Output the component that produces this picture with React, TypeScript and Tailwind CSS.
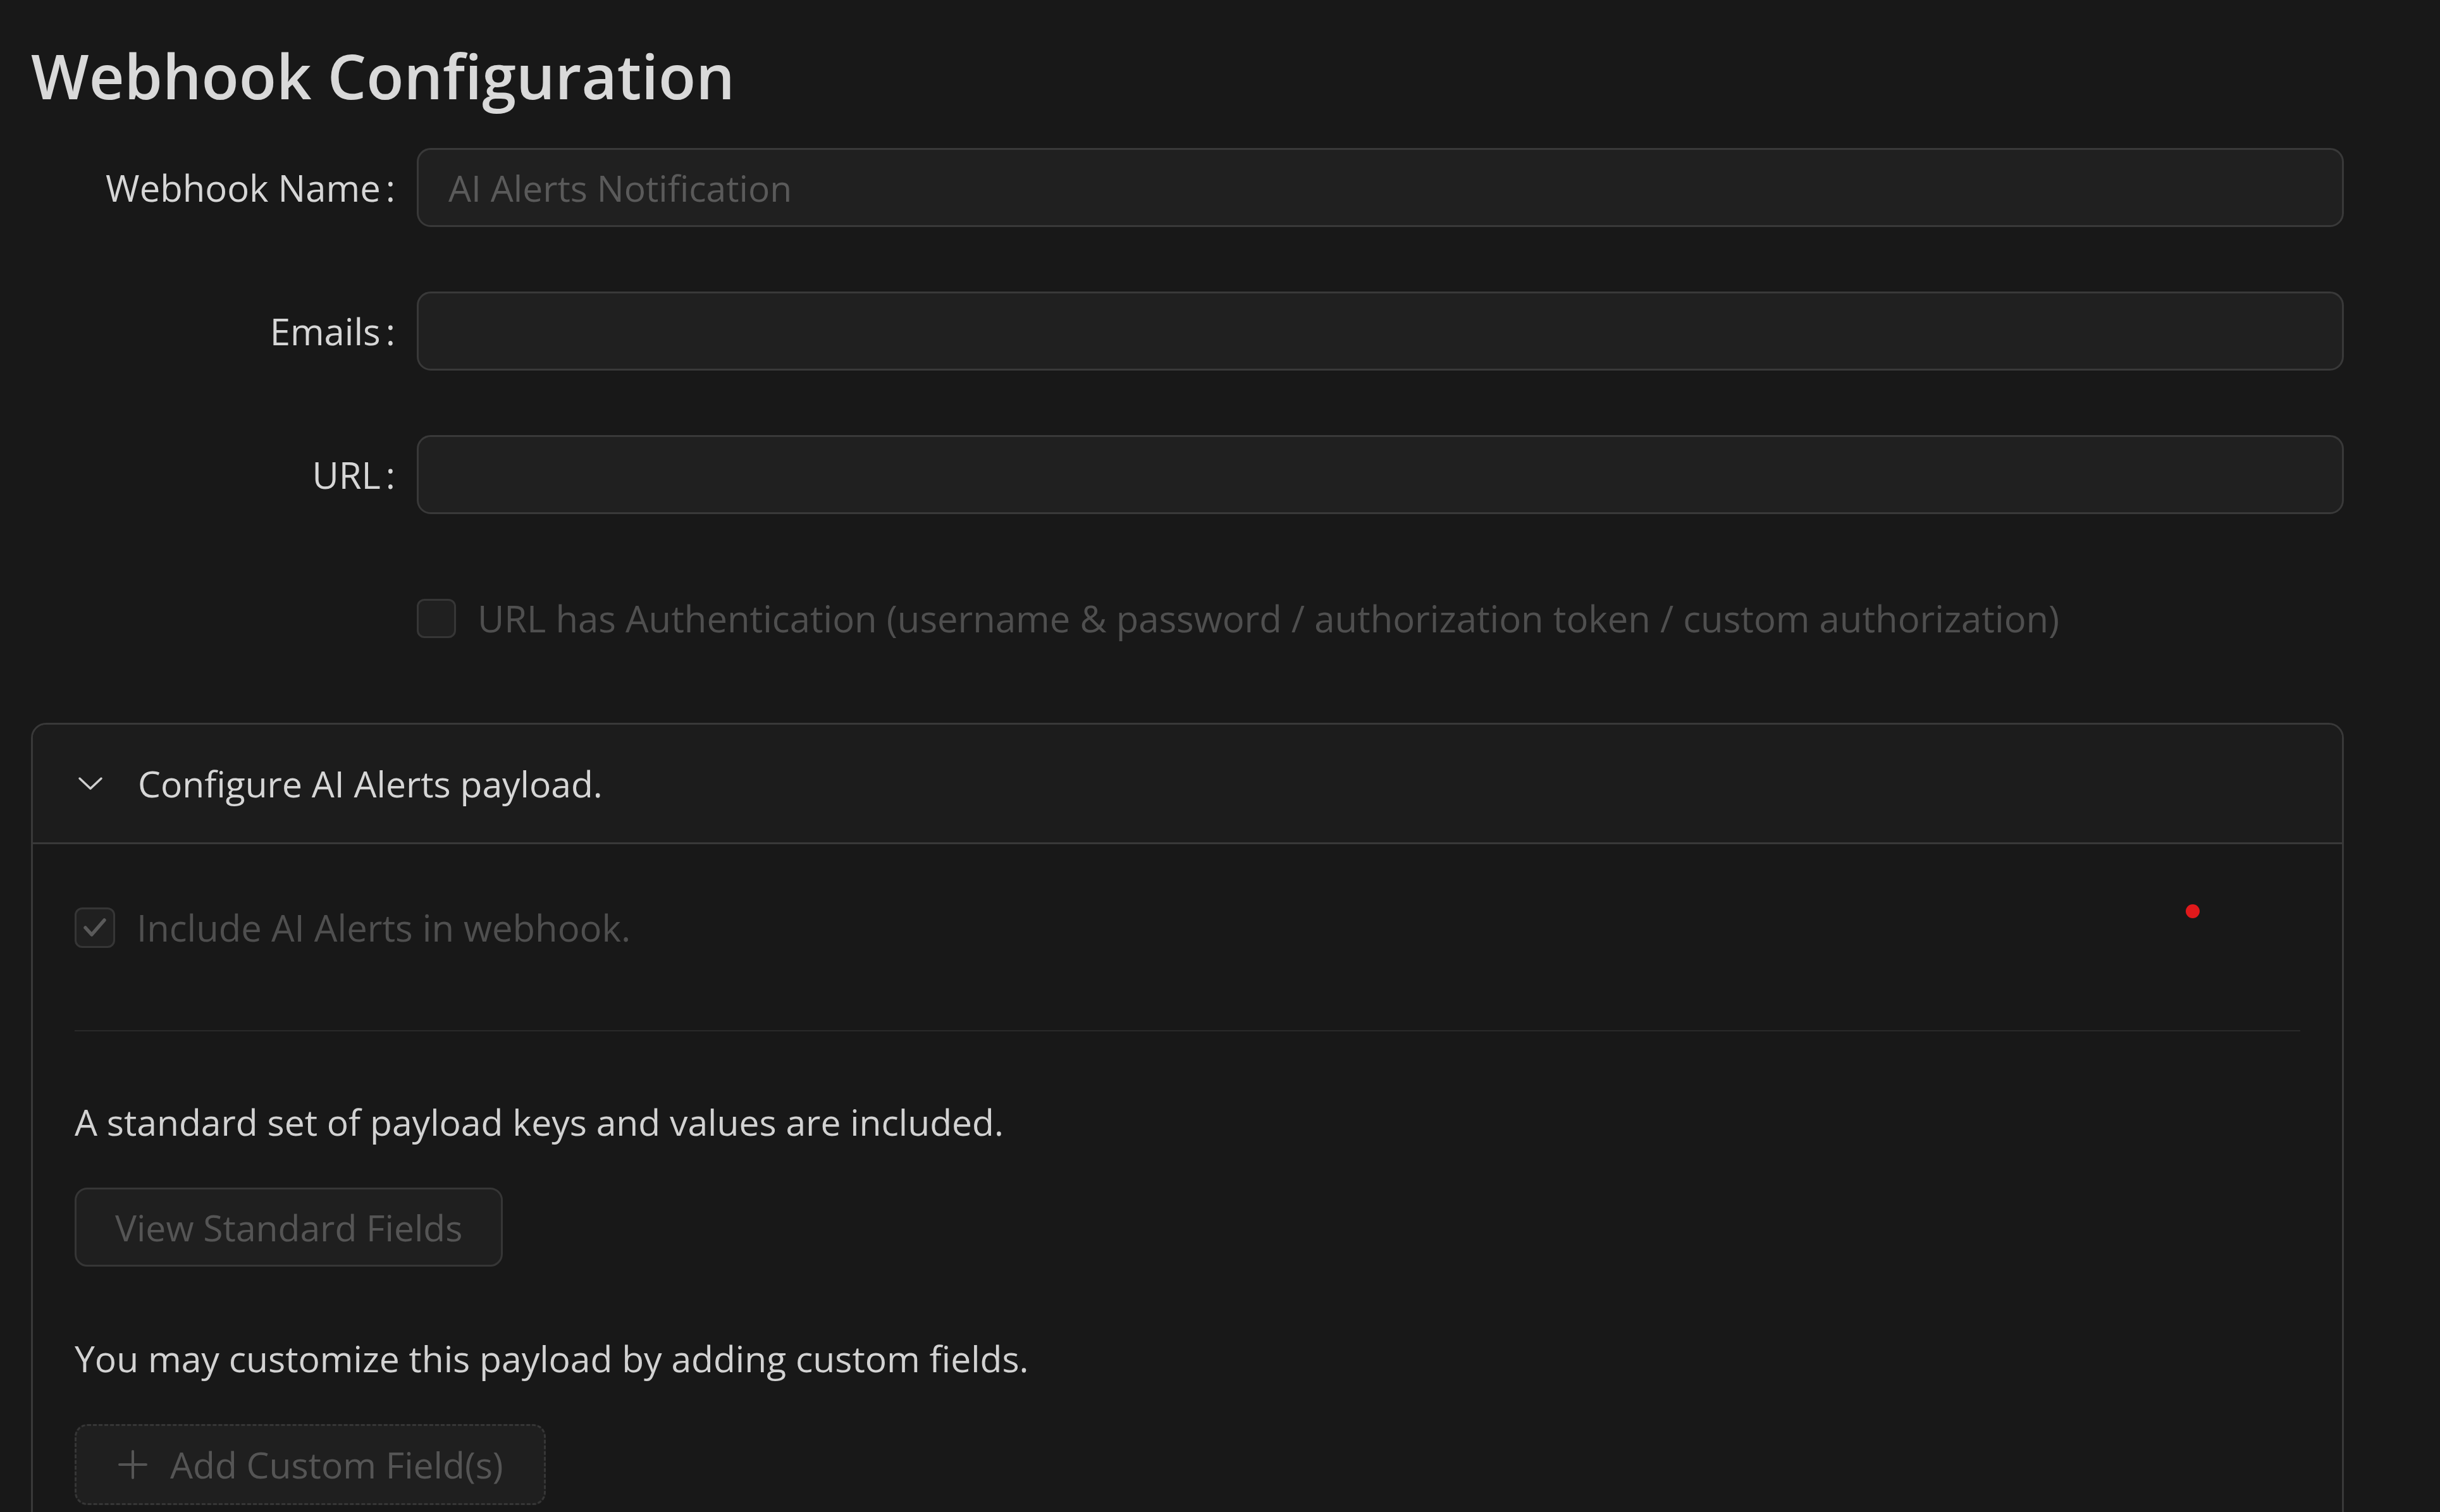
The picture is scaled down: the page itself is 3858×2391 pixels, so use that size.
import React from "react";

function Chevron() {
  return (
    <svg width="40" height="22" viewBox="0 0 40 22" fill="none">
      <path d="M3 3 L20 19 L37 3" stroke="#cfcfcf" strokeWidth="3.5" strokeLinecap="round" strokeLinejoin="round" />
    </svg>
  );
}

function Row({ label, children }: { label?: string; children: React.ReactNode }) {
  return (
    <div className="flex h-[125px] items-center">
      <div className="w-[610px] shrink-0 pr-[34px] text-right text-[58px] text-[#d6d6d6]">
        {label ? (
          <span>
            {label}
            <span className="ml-[8px]">:</span>
          </span>
        ) : null}
      </div>
      <div className="flex flex-1 items-center">{children}</div>
    </div>
  );
}

function Input({ placeholder }: { placeholder?: string }) {
  return (
    <input
      placeholder={placeholder}
      className="h-[125px] w-full rounded-[22px] border-[3px] border-[#393939] bg-[#202020] px-[47px] text-[57px] text-[#d6d6d6] outline-none placeholder:text-[#5a5a5a]"
    />
  );
}

export default function App() {
  return (
    <div className="h-[2391px] w-full overflow-hidden bg-[#181818] font-['Open_Sans',sans-serif] text-[57px] leading-[88px]">
      <div className="pl-[49px] pr-[152px]">
        <h1 className="pt-[62px] text-[97px] font-semibold leading-[115px] text-[#d9d9d9]">Webhook Configuration</h1>
        <div className="mt-[57px] flex flex-col gap-[102px]">
          <Row label="Webhook Name">
            <Input placeholder="AI Alerts Notification" />
          </Row>
          <Row label="Emails">
            <Input />
          </Row>
          <Row label="URL">
            <Input />
          </Row>
          <Row>
            <div className="flex items-center gap-[34px]">
              <div className="h-[62px] w-[62px] rounded-[12px] border-[3px] border-[#363636] bg-[#202020]" />
              <span className="text-[58px] text-[#4f4f4f]">
                URL has Authentication (username &amp; password / authorization token / custom authorization)
              </span>
            </div>
          </Row>
        </div>

        <div className="mt-[103px] overflow-hidden rounded-[24px] border-[3px] border-[#393939]">
          <div className="flex h-[189px] items-center gap-[55px] border-b-[3px] border-[#393939] bg-[#1c1c1c] pl-[71px]">
            <Chevron />
            <span className="text-[#d6d6d6]">Configure AI Alerts payload.</span>
          </div>
          <div className="relative px-[66px] pb-[200px] pt-[68px]">
            <div className="absolute right-[225px] top-[95px] h-[22px] w-[22px] rounded-full bg-[#e0191b]" />
            <div className="flex h-[128px] items-center gap-[34px]">
              <div className="flex h-[64px] w-[64px] items-center justify-center rounded-[12px] border-[3px] border-[#363636] bg-[#202020]">
                <svg width="40" height="34" viewBox="0 0 40 34" fill="none">
                  <path d="M5 17 L15 28 L35 5" stroke="#5a5a5a" strokeWidth="5.5" strokeLinecap="round" strokeLinejoin="round" />
                </svg>
              </div>
              <span className="text-[58px] text-[#4f4f4f]">Include AI Alerts in webhook.</span>
            </div>
            <div className="mt-[98px] h-[2px] bg-[#2a2a2a]" />
            <p className="mt-[99px] text-[#d2d2d2]">A standard set of payload keys and values are included.</p>
            <button className="mt-[60px] flex h-[125px] items-center rounded-[20px] border-[3px] border-[#363636] bg-[#1f1f1f] px-[61px] text-[#555555]">
              View Standard Fields
            </button>
            <p className="mt-[101px] text-[#d2d2d2]">You may customize this payload by adding custom fields.</p>
            <button className="mt-[60px] flex h-[128px] items-center gap-[34px] rounded-[20px] border-[3px] border-dashed border-[#363636] bg-[#1f1f1f] px-[64px] text-[#555555]">
              <svg width="50" height="50" viewBox="0 0 50 50" fill="none">
                <path d="M25 4 V46 M4 25 H46" stroke="#555555" strokeWidth="4" strokeLinecap="round" />
              </svg>
              Add Custom Field(s)
            </button>
          </div>
        </div>
      </div>
    </div>
  );
}
